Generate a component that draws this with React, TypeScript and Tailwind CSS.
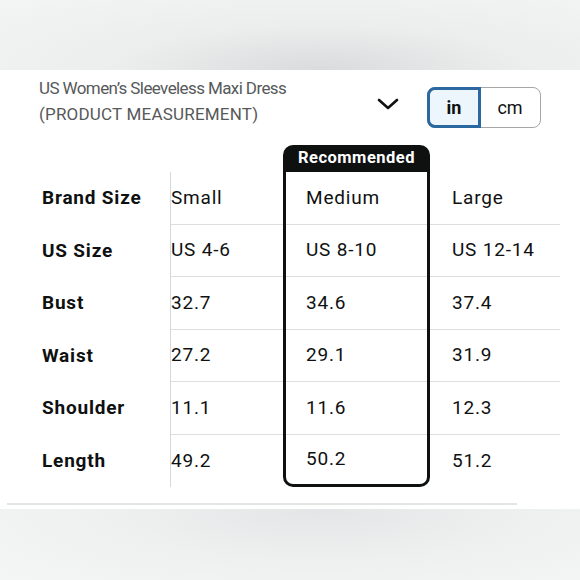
import React from 'react';

const rows = [
  { label: 'Brand Size', small: 'Small', medium: 'Medium', large: 'Large' },
  { label: 'US Size', small: 'US 4-6', medium: 'US 8-10', large: 'US 12-14' },
  { label: 'Bust', small: '32.7', medium: '34.6', large: '37.4' },
  { label: 'Waist', small: '27.2', medium: '29.1', large: '31.9' },
  { label: 'Shoulder', small: '11.1', medium: '11.6', large: '12.3' },
  { label: 'Length', small: '49.2', medium: '50.2', large: '51.2' },
];

const App: React.FC = () => {
  return (
    <div className="w-[580px] h-[580px] overflow-hidden bg-white font-['Roboto',sans-serif] text-[#0f1111]">
      {/* blurred band on top */}
      <div className="h-[70px] bg-[radial-gradient(ellipse_at_55%_100%,#dadbdc_0%,#eceeee_45%,#f3f4f4_100%)]" />

      {/* Header */}
      <div className="flex items-start pl-[39px] pr-[39px] pt-[5px]">
        <div className="flex-1 text-[17px] leading-[26px] text-[#565959]">
          <div className="tracking-[-0.6px]">US Women’s Sleeveless Maxi Dress</div>
          <div className="tracking-[0.2px]">(PRODUCT MEASUREMENT)</div>
        </div>
        <svg width="22" height="12" viewBox="0 0 22 12" className="mt-[23px] mr-[28px]">
          <polyline points="2,2 11,10 20,2" fill="none" stroke="#0f1111" strokeWidth="2.6" strokeLinecap="round" strokeLinejoin="round" />
        </svg>
        <div className="mt-[12px] flex h-[41px] w-[114px] rounded-[8px] border border-[#a6a6a6]">
          <div className="-m-px flex w-[54px] items-center justify-center rounded-l-[8px] border-[3px] border-[#2b68a0] bg-[#edf6fc] text-[18px] font-bold">
            in
          </div>
          <div className="flex flex-1 items-center justify-center text-[18px]">cm</div>
        </div>
      </div>

      {/* Table */}
      <div className="mt-[17px] flex text-[19px] tracking-[0.8px]">
        <div className="w-[170px] pl-[42px]">
          <div className="h-[27px]" />
          {rows.map((r) => (
            <div key={r.label} className="flex h-[52.5px] items-center font-bold">
              {r.label}
            </div>
          ))}
        </div>

        <div className="w-[113px]">
          <div className="h-[27px]" />
          <div className="border-l border-[#d5d9d9]">
            {rows.map((r, i) => (
              <div
                key={r.label}
                className={`flex h-[52.5px] items-center ${i < rows.length - 1 ? 'border-b border-[#dcdfdf]' : ''}`}
              >
                {r.small}
              </div>
            ))}
          </div>
        </div>

        <div className="w-[147px]">
          <div className="flex h-[27px] items-center justify-center rounded-t-[10px] bg-[#0f1111] text-[16.5px] font-bold tracking-[0.5px] text-white">
            Recommended
          </div>
          <div className="rounded-b-[10px] border-[3px] border-t-0 border-[#0f1111]">
            {rows.map((r, i) => (
              <div
                key={r.label}
                className={`flex items-center pl-[20px] ${i < rows.length - 1 ? 'h-[52.5px] border-b border-[#dcdfdf]' : 'h-[49.5px]'}`}
              >
                {r.medium}
              </div>
            ))}
          </div>
        </div>

        <div className="w-[130px]">
          <div className="h-[27px]" />
          {rows.map((r, i) => (
            <div
              key={r.label}
              className={`flex h-[52.5px] items-center pl-[22px] ${i < rows.length - 1 ? 'border-b border-[#dcdfdf]' : ''}`}
            >
              {r.large}
            </div>
          ))}
        </div>
      </div>

      {/* Footer line and band */}
      <div className="mt-[16px] ml-[7px] h-[2px] w-[510px] bg-[#e3e5e5]" />
      <div className="mt-[4px] h-[80px] bg-[radial-gradient(ellipse_at_55%_0%,#e4e5e6_0%,#eef0f0_45%,#f5f6f6_100%)]" />
    </div>
  );
};

export default App;
